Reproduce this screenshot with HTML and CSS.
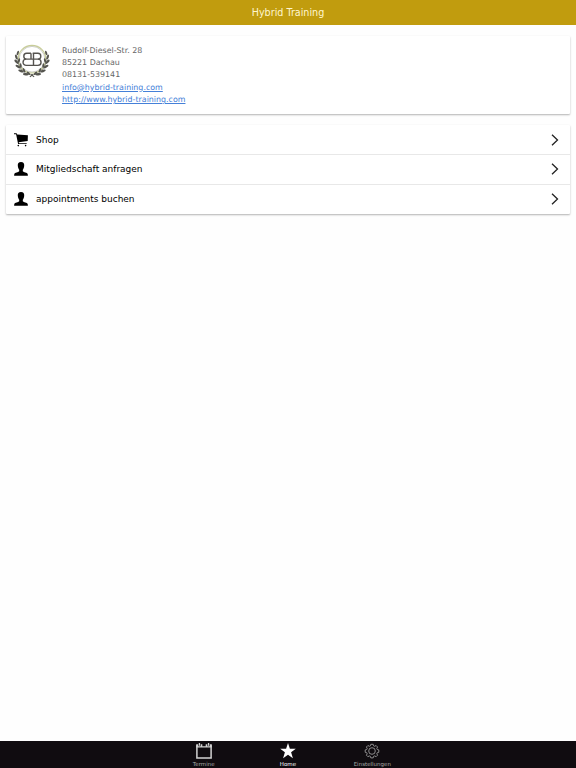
FILE: index.html
```html
<!DOCTYPE html>
<html lang="de">
<head>
    <meta charset="UTF-8">
    <meta name="viewport" content="width=device-width, initial-scale=1.0">
    <title>Hybrid Training</title>
    <link rel="stylesheet" href="styles.css">
</head>
<body>
    <header class="header">Hybrid Training</header>

    <main class="content">
        <section class="card contact">
            <svg class="logo" viewBox="0 0 36 36">
                <defs>
                    <g id="branch" fill="#55554f">
                        <path d="M18 32C9 31 4 25 3.500 15" fill="none" stroke="#55554f" stroke-width=".5"/>
                        <ellipse cx="3.800" cy="10" rx="1" ry="2.400" transform="rotate(18 3.800 10)"/>
                        <ellipse cx="2.300" cy="14" rx="1.100" ry="2.500" transform="rotate(-20 2.300 14)"/>
                        <ellipse cx="2.500" cy="18.800" rx="1.200" ry="2.700" transform="rotate(-42 2.500 18.800)"/>
                        <ellipse cx="4" cy="23.600" rx="1.200" ry="2.800" transform="rotate(-58 4 23.600)"/>
                        <ellipse cx="7" cy="28" rx="1.200" ry="2.900" transform="rotate(-72 7 28)"/>
                        <ellipse cx="11.800" cy="31.200" rx="1.200" ry="2.900" transform="rotate(-85 11.800 31.200)"/>
                        <ellipse cx="5" cy="17.500" rx="1" ry="2.200" transform="rotate(15 5 17.500)"/>
                        <ellipse cx="6.700" cy="22.600" rx="1" ry="2.300" transform="rotate(-8 6.700 22.600)"/>
                        <ellipse cx="10" cy="27.200" rx="1" ry="2.300" transform="rotate(-28 10 27.200)"/>
                        <ellipse cx="14.500" cy="30.300" rx="1" ry="2.200" transform="rotate(-50 14.500 30.300)"/>
                        <path d="M17.500 31l3 2.600-.8.700-3-2.600z"/>
                    </g>
                </defs>
                <circle cx="18" cy="16.200" r="13.800" fill="none" stroke="#c8cd98" stroke-width="1.200"/>
                <circle cx="18" cy="16.200" r="12.800" fill="none" stroke="#85887a" stroke-width=".4"/>
                <use href="#branch"/>
                <use href="#branch" transform="matrix(-1 0 0 1 36 0)"/>
                <g fill="none" stroke="#55534f" stroke-width="1.400">
                    <path d="M17 10.300h-4.300a2.900 2.900 0 0 0 0 5.800h11.200a2.900 2.900 0 0 0 0-5.800h-5.200"/>
                    <path d="M12.200 16.100a3.100 3.100 0 0 0 0 6.300h11.700a3.100 3.100 0 0 0 0-6.300M17 10.300v5.800M19.500 10.300v12.100"/>
                </g>
            </svg>
            <address class="address">
                <div>Rudolf-Diesel-Str. 28</div>
                <div>85221 Dachau</div>
                <div>08131-539141</div>
                <div><a href="mailto:info@hybrid-training.com">info@hybrid-training.com</a></div>
                <div><a href="http://www.hybrid-training.com">http://www.hybrid-training.com</a></div>
            </address>
        </section>

        <nav class="card menu">
            <a class="row" href="#">
                <svg class="icon" viewBox="0 0 14 14"><path d="M0 .3h2.600l.6 1.300 10.700.6-.2 5.800-9 1.200.3 1h7.700v.8H4.100L2.100 1.300H0z"/><circle cx="4.300" cy="12.600" r=".8"/><circle cx="11.600" cy="12.600" r=".8"/></svg>
                <span class="label">Shop</span>
                <svg class="arrow" viewBox="0 0 8 12"><path d="M1 .7l5.500 5.300L1 11.300"/></svg>
            </a>
            <a class="row" href="#">
                <svg class="icon" viewBox="0 0 14 14"><path d="M7 0c2.400 0 3.400 1.500 3.200 3.700C10 6 9.300 7 8.800 7.700v1.500c.8 1 4.400 1.300 4.900 2.700l.2 1.800H.1l.2-1.800c.5-1.400 4.100-1.700 4.900-2.700V7.700C4.700 7 4 6 3.800 3.700 3.600 1.500 4.600 0 7 0z"/></svg>
                <span class="label">Mitgliedschaft anfragen</span>
                <svg class="arrow" viewBox="0 0 8 12"><path d="M1 .7l5.500 5.300L1 11.300"/></svg>
            </a>
            <a class="row" href="#">
                <svg class="icon" viewBox="0 0 14 14"><path d="M7 0c2.400 0 3.400 1.500 3.200 3.700C10 6 9.300 7 8.800 7.700v1.500c.8 1 4.400 1.300 4.900 2.700l.2 1.800H.1l.2-1.800c.5-1.400 4.100-1.700 4.900-2.700V7.700C4.700 7 4 6 3.800 3.700 3.600 1.500 4.600 0 7 0z"/></svg>
                <span class="label">appointments buchen</span>
                <svg class="arrow" viewBox="0 0 8 12"><path d="M1 .7l5.500 5.300L1 11.300"/></svg>
            </a>
        </nav>
    </main>

    <footer class="tabs">
        <a class="tab" href="#">
            <svg class="tab-icon" viewBox="0 0 16 16"><path d="M.9 2.200v12.700h14.200V2.200" fill="none" stroke="#d2d2d2" stroke-width="1.500"/><path d="M.2 1.300h2v2h2.500v-2h1.600v2h3.400v-2h1.600v2h2.500v-2h2v3.200H.2zM2.800 0h1.300v2.800H2.800zM11.900 0h1.300v2.800h-1.300z" fill="#d2d2d2"/></svg>
            <span>Termine</span>
        </a>
        <a class="tab active" href="#">
            <svg class="tab-icon" viewBox="0 0 16 16"><path d="M8 .1l1.900 5.600h5.900L11.100 9.200l1.800 6L8 11.700l-4.900 3.500 1.800-6L.2 5.700h5.900z" fill="#fff"/></svg>
            <span>Home</span>
        </a>
        <a class="tab" href="#">
            <svg class="tab-icon" viewBox="0 0 16 16" fill="none" stroke="#aaa" stroke-width=".8"><circle cx="8" cy="8" r="3.300"/><path d="M6.800 1.300h2.400l.4 1.500 1.100.5 1.400-.8 1.500 1.500-.8 1.400.5 1.100 1.500.4v2.400l-1.500.4-.5 1.100.8 1.400-1.500 1.500-1.400-.8-1.100.5-.4 1.500H6.800l-.4-1.500-1.100-.5-1.400.8-1.500-1.500.8-1.400-.5-1.100-1.500-.4V6.900l1.500-.4.5-1.100-.8-1.400 1.500-1.500 1.400.8 1.100-.5z"/></svg>
            <span>Einstellungen</span>
        </a>
    </footer>
</body>
</html>
```
FILE: styles.css
```css
* {
    box-sizing: border-box;
}

body {
    margin: 0;
    height: 100vh;
    display: flex;
    flex-direction: column;
    background-color: #fefefe;
    font-family: "DejaVu Sans", sans-serif;
}

.header {
    height: 25px;
    line-height: 26px;
    background-color: #c19c0e;
    color: #fff6cf;
    font-size: 9.6px;
    text-align: center;
}

.content {
    flex: 1;
    padding: 11px 6px;
}

.card {
    background-color: #fff;
    border-radius: 1px;
    box-shadow: 0 1px 2px rgba(0, 0, 0, 0.3);
}

.contact {
    display: flex;
    height: 78px;
    padding: 8px;
    margin-bottom: 11px;
}

.logo {
    width: 36px;
    height: 36px;
    margin-right: 12px;
    margin-top: -1px;
}

.address {
    padding-top: 0.5px;
    font-size: 7.92px;
    font-style: normal;
    line-height: 12.4px;
    color: #666;
}

.address a {
    color: #4580d8;
}

.row {
    display: flex;
    align-items: center;
    height: 30px;
    padding: 0 11px 1px 8px;
    border-bottom: 1px solid #e8e8e8;
    color: #000;
    text-decoration: none;
}

.row:first-child {
    padding-bottom: 0;
}

.row:last-child {
    border-bottom: none;
    height: 29px;
}

.icon {
    width: 14px;
    height: 14px;
}

.label {
    flex: 1;
    margin-left: 8px;
    font-size: 9px;
}

.arrow {
    width: 8px;
    height: 12px;
    fill: none;
    stroke: #222;
    stroke-width: 1.3;
}

.tabs {
    display: flex;
    justify-content: center;
    height: 27px;
    background-color: #100c10;
}

.tab {
    display: flex;
    flex-direction: column;
    align-items: center;
    width: 84.3px;
    padding-top: 2px;
    color: #aaa;
    font-size: 5.5px;
    line-height: 8px;
    text-decoration: none;
}

.tab.active {
    color: #fff;
}

.tab-icon {
    width: 16px;
    height: 16px;
    margin-bottom: 1px;
}
```
